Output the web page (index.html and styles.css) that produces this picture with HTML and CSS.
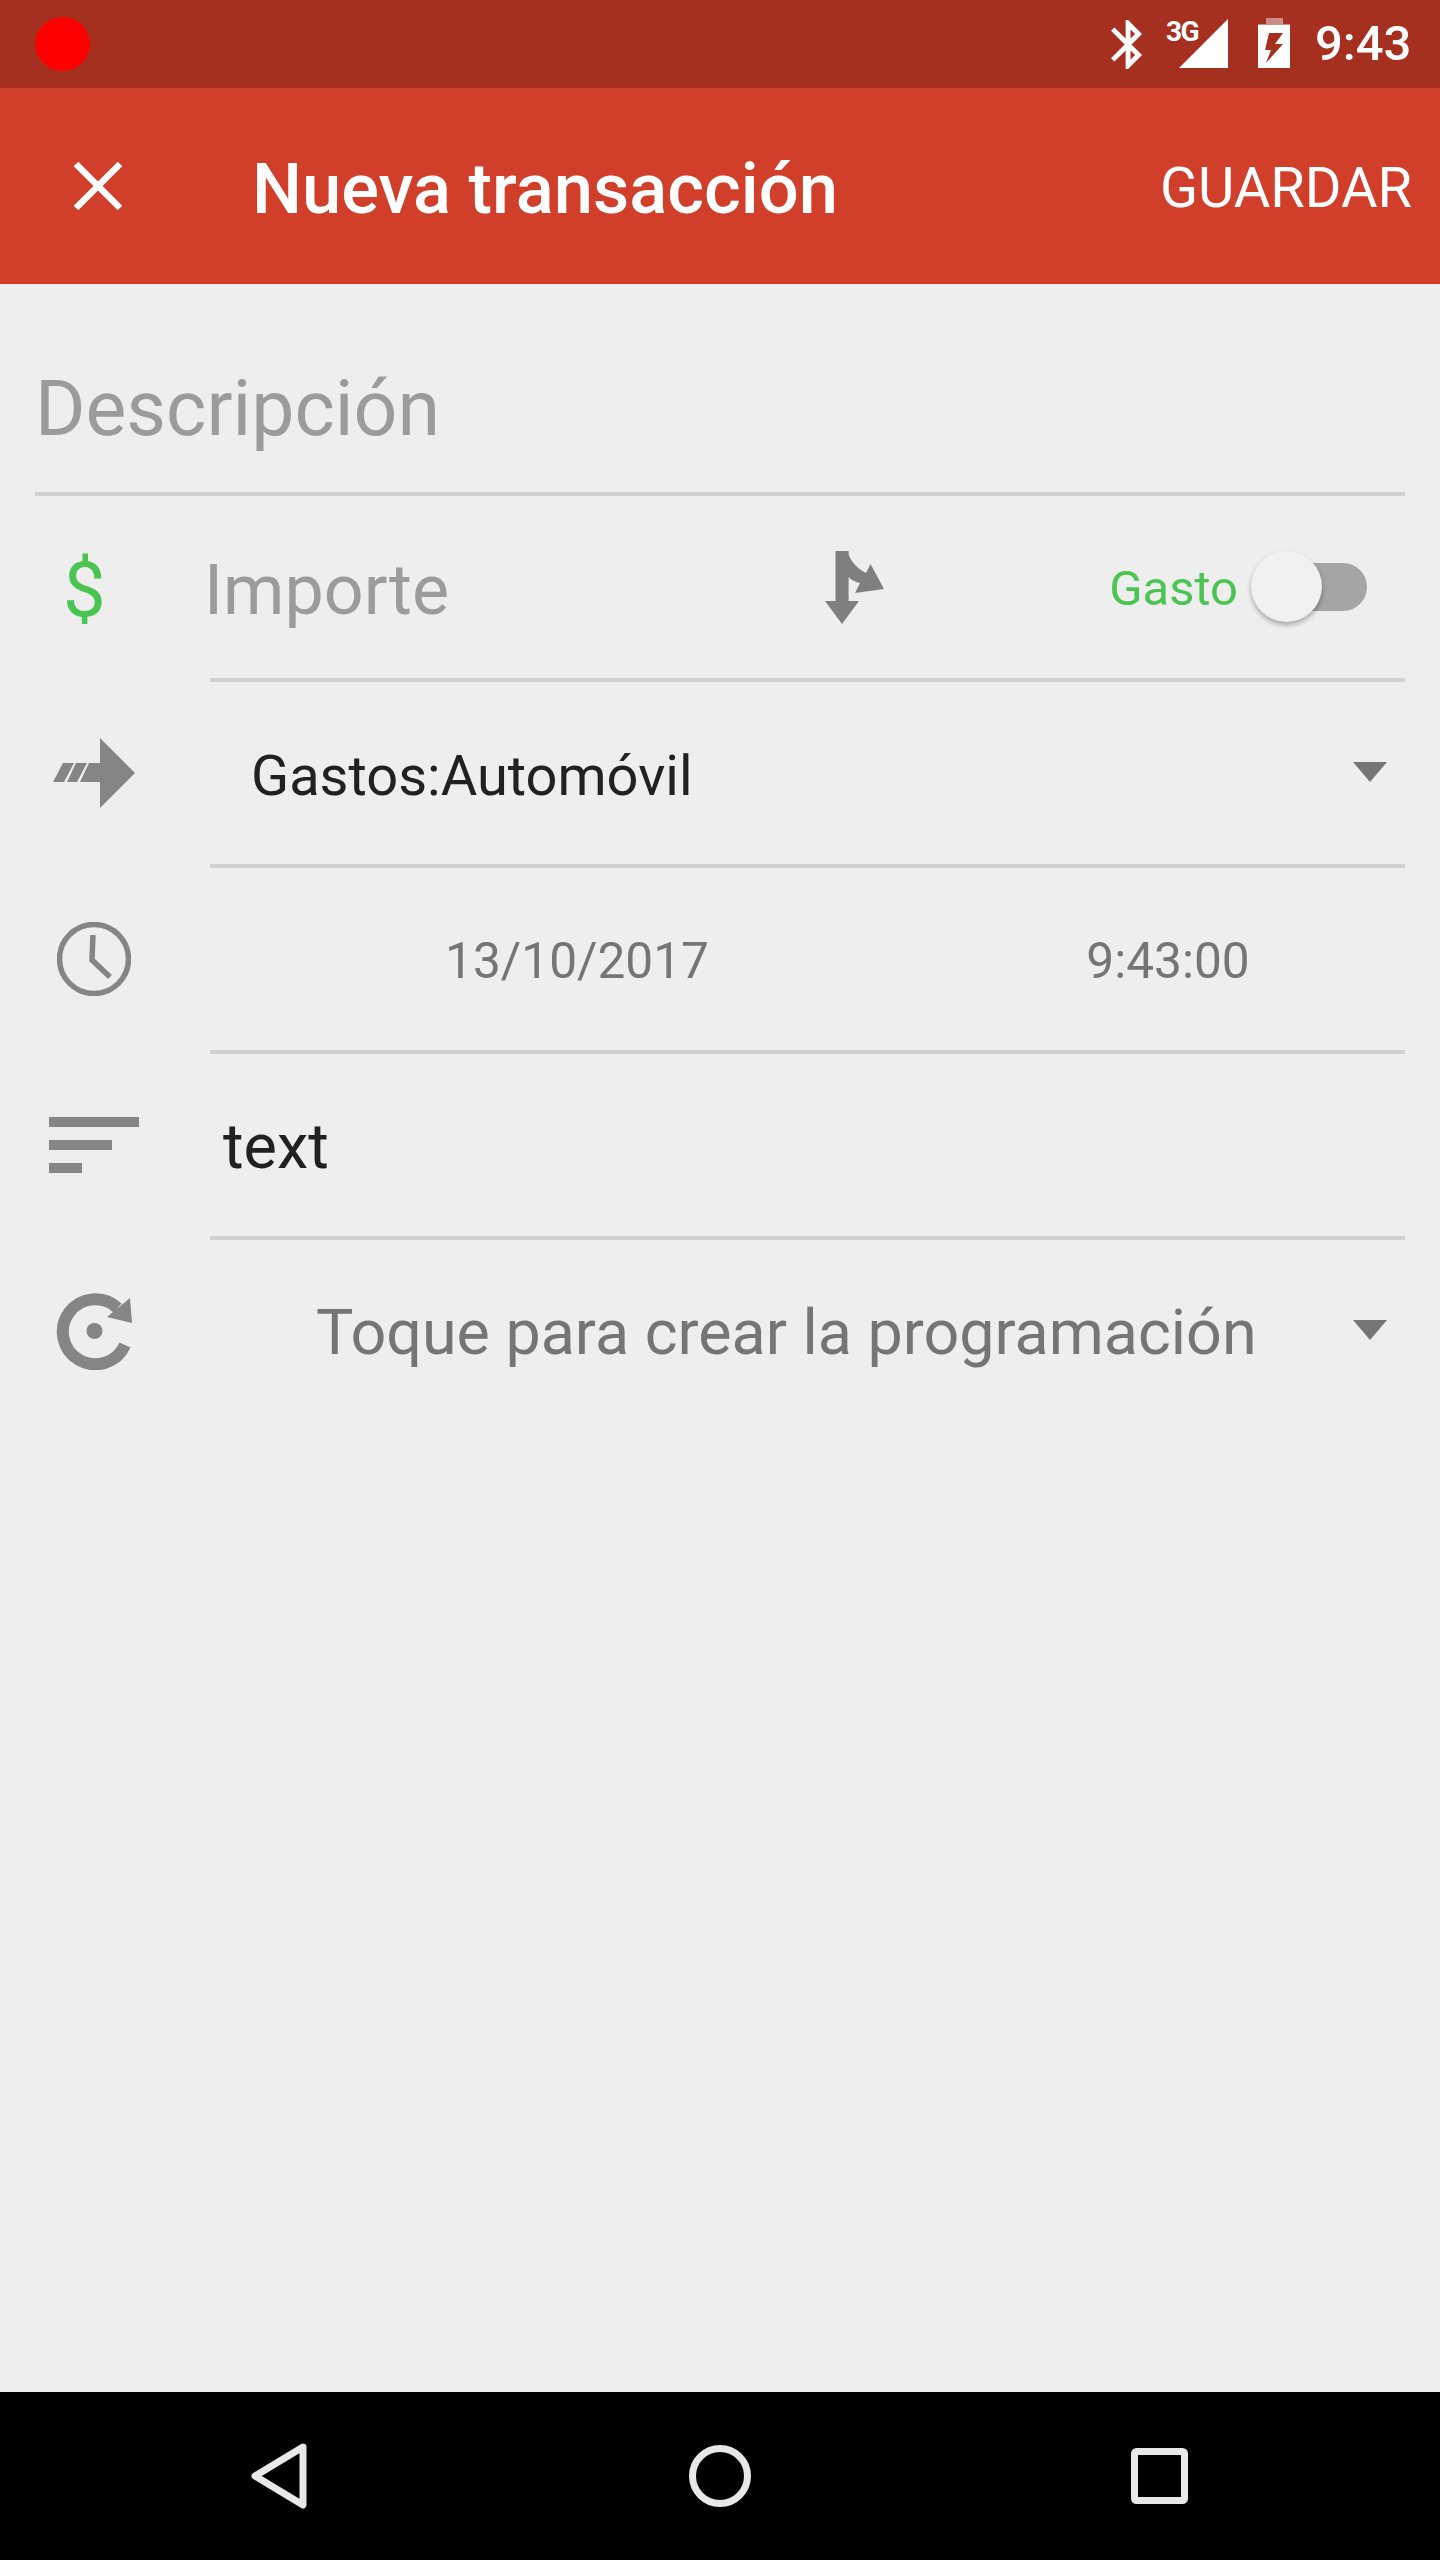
FILE: index.html
```html
<!DOCTYPE html>
<html>
<head>
    <meta charset="utf-8" />
    <title>Nueva transacción</title>
    <link rel="stylesheet" href="styles.css">
</head>
<body>
<div class="screen">
    <div class="statusbar">
        <span class="rec-dot"></span>
        <svg class="st-bt" viewBox="5 2 12.71 20"><path d="M17.71 7.71L12 2h-1v7.59L6.41 5 5 6.41 10.59 12 5 17.59 6.41 19 11 14.41V22h1l5.71-5.71-4.3-4.29 4.3-4.29zM13 5.83l1.88 1.88L13 9.59V5.83zm1.88 10.46L13 18.17v-3.76l1.88 1.88z"/></svg>
        <div class="st-signal">
            <span class="st-3g">3G</span>
            <svg viewBox="1178 19 49 49"><path d="M1178 68L1227 19V68Z"/></svg>
        </div>
        <svg class="st-batt" viewBox="1257 18 32 50">
            <path class="batt-top" d="M1265 18H1282V24H1289V25H1257V24H1265Z"/>
            <path fill-rule="evenodd" d="M1257 25H1289V68H1257ZM1268 33L1264 50H1270L1265 63L1282 44H1274L1282 33Z"/>
        </svg>
        <span class="st-time">9:43</span>
    </div>

    <div class="toolbar">
        <svg class="tb-close" viewBox="0 0 50 50"><path d="M3 3L47 47M47 3L3 47"/></svg>
        <span class="tb-title">Nueva transacción</span>
        <span class="tb-save">GUARDAR</span>
    </div>

    <div class="form">
        <div class="desc">Descripción</div>

        <div class="row">
            <div class="row-icon"><span class="dollar">$</span></div>
            <div class="row-main">
                <span class="amount">Importe</span>
                <svg class="split" viewBox="825 550 59 73"><path d="M835.5 550H848.6V553C851 561 858 568 866 572L870.5 563L884 588L855 592L860 582C855 581 851 579 848.6 576V600H859L842 623L825 600H835.5Z"/></svg>
                <span class="gasto">Gasto</span>
                <div class="switch"><span class="thumb"></span></div>
            </div>
        </div>

        <div class="row">
            <div class="row-icon">
                <svg class="ic-transfer" viewBox="53 738 82 70"><path d="M53 782L63 763H74L64 782ZM67 782L76 763H87L77 782ZM80 782L89 763H100V738L135 773L100 808V782Z"/></svg>
            </div>
            <div class="row-main">
                <span class="account">Gastos:Automóvil</span>
                <span class="caret"></span>
            </div>
        </div>

        <div class="row">
            <div class="row-icon">
                <svg class="ic-clock" viewBox="57 922 74 74"><circle cx="94" cy="959" r="34.5"/><path d="M93 935L92 960L110 977"/></svg>
            </div>
            <div class="row-main datetime">
                <span>13/10/2017</span>
                <span>9:43:00</span>
            </div>
        </div>

        <div class="row">
            <div class="row-icon">
                <svg class="ic-sort" viewBox="49 1117 90 56"><path d="M49 1117H139V1127H49ZM49 1140H112V1150H49ZM49 1163H82V1173H49Z"/></svg>
            </div>
            <div class="row-main">
                <span class="note">text</span>
            </div>
        </div>

        <div class="row last">
            <div class="row-icon">
                <svg class="ic-repeat" viewBox="56 1292 78 78">
                    <path class="ring" d="M117.5 1308A32.5 32.5 0 1 0 125 1345"/>
                    <path d="M130 1298L132 1323L107 1317Z"/>
                    <circle cx="94.5" cy="1331" r="8"/>
                </svg>
            </div>
            <div class="row-main">
                <span class="schedule">Toque para crear la programación</span>
                <span class="caret"></span>
            </div>
        </div>
    </div>

    <div class="navbar">
        <svg class="nav-back" viewBox="0 0 58 66"><path d="M53 4L5 33L53 62Z"/></svg>
        <svg class="nav-home" viewBox="0 0 62 62"><circle cx="31" cy="31" r="27.5"/></svg>
        <svg class="nav-recent" viewBox="0 0 57 56"><rect x="3.5" y="3.5" width="50" height="49" rx="2"/></svg>
    </div>
</div>
</body>
</html>
```

FILE: styles.css
```css
*{margin: 0;padding: 0;box-sizing: border-box;}
body{
    background-color: #eeeeee;
    font-family: Roboto, "Noto Sans", sans-serif;
}
svg{display: block;flex: none;}
.screen{
    width: 1440px;
    height: 2560px;
    display: flex;
    flex-direction: column;
    background-color: #eeeeee;
}

/* status bar */
.statusbar{
    height: 88px;
    display: flex;
    align-items: flex-start;
    background-color: #a5301f;
    color: #fff;
    fill: #fff;
}
.rec-dot{
    width: 55px;
    height: 54px;
    margin: 17px 0 0 35px;
    border-radius: 50%;
    background-color: #ff0000;
}
.st-bt{
    width: 31px;
    height: 49px;
    margin: 20px 0 0 1021px;
}
.st-signal{
    width: 60px;
    height: 49px;
    margin: 19px 0 0 26px;
    display: flex;
    justify-content: flex-end;
    position: relative;
}
.st-signal svg{width: 49px;height: 49px;}
.st-3g{
    position: absolute;
    left: -2px;
    top: -3px;
    font-size: 28px;
    font-weight: 700;
    letter-spacing: -1.5px;
    line-height: 32px;
}
.st-batt{
    width: 32px;
    height: 50px;
    margin: 18px 0 0 30px;
}
.batt-top{opacity: .45;}
.st-time{
    margin: 15px 0 0 25px;
    font-size: 49px;
    font-weight: 500;
    line-height: 58px;
}

/* toolbar */
.toolbar{
    height: 196px;
    display: flex;
    align-items: center;
    background-color: #d13f2a;
    color: #fff;
}
.tb-close{
    width: 50px;
    height: 50px;
    margin-left: 73px;
    fill: none;
    stroke: #fff;
    stroke-width: 6.5px;
}
.tb-title{
    margin-left: 129px;
    padding-top: 5px;
    font-size: 70.5px;
    font-weight: 500;
}
.tb-save{
    margin-left: auto;
    margin-right: 28px;
    padding-top: 4px;
    font-size: 56px;
}

/* form */
.form{flex: 1;}
.desc{
    height: 212px;
    margin: 0 35px;
    padding-top: 80px;
    border-bottom: 4px solid #d0d0d0;
    font-size: 77px;
    line-height: 90px;
    color: #9b9b9b;
}
.row{
    height: 186px;
    display: flex;
}
.row-icon{
    width: 210px;
    flex: none;
    display: flex;
    align-items: center;
    padding-bottom: 4px;
}
.row-main{
    flex: 1;
    margin-right: 35px;
    display: flex;
    align-items: center;
    border-bottom: 4px solid #d0d0d0;
}
.last .row-main{border-bottom-color: transparent;}

.dollar{
    margin-left: 63px;
    padding-top: 6px;
    font-size: 76px;
    line-height: 74px;
    color: #4ac552;
}
.amount{
    width: 621px;
    margin-left: -6px;
    padding-top: 6px;
    font-size: 70px;
    color: #9b9b9b;
}
.split{
    width: 59px;
    height: 73px;
    margin-top: 0;
    fill: #7f7f7f;
}
.gasto{
    margin-left: auto;
    padding-top: 2px;
    font-size: 49px;
    color: #4ac552;
}
.switch{
    width: 98px;
    height: 48px;
    margin: 0 38px 0 31px;
    border-radius: 24px;
    background-color: #a5a5a5;
    position: relative;
}
.thumb{
    position: absolute;
    left: -18px;
    top: -12px;
    width: 71px;
    height: 71px;
    border-radius: 50%;
    background-color: #f1f1f1;
    box-shadow: 0 3px 5px rgba(0,0,0,.3);
}
.ic-transfer{width: 82px;height: 70px;margin-left: 53px;fill: #858585;}
.account{
    margin-left: 41px;
    padding-top: 6px;
    font-size: 56px;
    color: #212121;
}
.caret{
    margin-left: auto;
    margin-right: 18px;
    margin-bottom: 3px;
    width: 0;
    height: 0;
    border-style: solid;
    border-width: 20px 17.5px 0 17.5px;
    border-color: #757575 transparent transparent transparent;
}
.ic-clock{
    width: 74px;
    height: 74px;
    margin-left: 57px;
    fill: none;
    stroke: #858585;
    stroke-width: 5.5px;
}
.datetime{
    display: grid;
    grid-template-columns: 734px 1fr;
    justify-items: center;
    padding: 3px 13px 0 0;
    font-size: 49.6px;
    color: #757575;
}
.ic-sort{width: 90px;height: 56px;margin-left: 49px;fill: #858585;}
.note{
    margin-left: 13px;
    padding-top: 3px;
    font-size: 63px;
    color: #212121;
}
.ic-repeat{width: 78px;height: 78px;margin-left: 56px;fill: #858585;}
.ring{fill: none;stroke: #858585;stroke-width: 12px;}
.schedule{
    margin-left: 106px;
    padding-top: 3px;
    font-size: 62.8px;
    color: #757575;
}

/* nav bar */
.navbar{
    height: 168px;
    background-color: #000;
    display: flex;
    align-items: center;
    fill: none;
    stroke: #e8e8e8;
    stroke-width: 7px;
    stroke-linejoin: round;
}
.nav-back{width: 58px;height: 66px;margin-left: 250px;}
.nav-home{width: 62px;height: 62px;margin-left: 381px;}
.nav-recent{width: 57px;height: 56px;margin-left: 380px;}
```
